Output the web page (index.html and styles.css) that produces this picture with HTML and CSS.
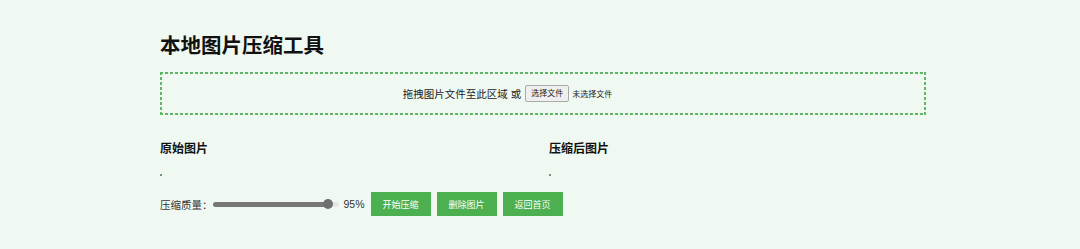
FILE: index.html
```html
<!DOCTYPE html>
<html lang="zh-CN">
<head>
<meta charset="utf-8">
<title>本地图片压缩工具</title>
<link rel="stylesheet" href="styles.css">
</head>
<body>
<div class="container">
  <h1 class="title">本地图片压缩工具</h1>
  <div class="dropzone">
    <span class="drop-text">拖拽图片文件至此区域 或</span>
    <span class="file-input">
      <span class="file-btn">选择文件</span>
      <span class="file-name">未选择文件</span>
    </span>
  </div>
  <div class="columns">
    <div class="col">
      <h3 class="col-title">原始图片</h3>
      <div class="preview"></div>
    </div>
    <div class="col">
      <h3 class="col-title">压缩后图片</h3>
      <div class="preview"></div>
    </div>
  </div>
  <div class="controls">
    <span class="label">压缩质量：</span>
    <input class="range" type="range" min="0" max="100" value="95">
    <span class="value">95%</span>
    <button class="btn">开始压缩</button>
    <button class="btn">删除图片</button>
    <button class="btn">返回首页</button>
  </div>
</div>
</body>
</html>
```
FILE: styles.css
```css
html, body {
  margin: 0;
  padding: 0;
  background: #f0f9f1;
}
body {
  font-family: "Liberation Sans", "Noto Sans CJK SC", sans-serif;
  color: #333;
  font-size: 10.5px;
}
.container {
  width: 766px;
  margin-left: 160px;
  padding-top: 34px;
}
.title {
  margin: 0;
  font-size: 20.5px;
  line-height: 24px;
  font-weight: 700;
  color: #111;
}
.dropzone {
  margin-top: 14px;
  height: 43px;
  display: flex;
  align-items: center;
  justify-content: center;
  color: #222;
  background:
    repeating-linear-gradient(to right, #5fb763 0 3px, transparent 3px 5px) left top / 100% 2px no-repeat,
    repeating-linear-gradient(to right, #5fb763 0 3px, transparent 3px 5px) left bottom / 100% 2px no-repeat,
    repeating-linear-gradient(to bottom, #5fb763 0 3px, transparent 3px 5px) left top / 2px 100% no-repeat,
    repeating-linear-gradient(to bottom, #5fb763 0 3px, transparent 3px 5px) right top / 2px 100% no-repeat;
}
.drop-text {
  font-size: 10.5px;
}
.file-input {
  display: inline-flex;
  align-items: center;
  width: 158px;
  margin-left: 4px;
}
.file-btn {
  font-size: 8px;
  line-height: 13px;
  padding: 1px 5px;
  border: 1px solid #aaa;
  border-radius: 2px;
  background: #efefef;
  color: #222;
}
.file-name {
  margin-left: 3px;
  font-size: 8px;
  color: #222;
}
.columns {
  margin-top: 26px;
  display: grid;
  grid-template-columns: 1fr 1fr;
  column-gap: 12px;
}
.col-title {
  margin: 0;
  font-size: 12px;
  line-height: 16px;
  font-weight: 700;
  color: #111;
}
.preview {
  margin-top: 17px;
  width: 2px;
  height: 2px;
  background: #6f9a78;
}
.controls {
  margin-top: 16px;
  display: flex;
  align-items: center;
  height: 24px;
}
.label {
  font-size: 10.5px;
  color: #333;
}
.range {
  -webkit-appearance: none;
  appearance: none;
  margin: 0;
  width: 126px;
  height: 5px;
  border-radius: 3px;
  background: linear-gradient(to right, #777 0, #777 92%, #e3e6e3 92%, #e3e6e3 100%);
  outline: none;
}
.range::-webkit-slider-thumb {
  -webkit-appearance: none;
  appearance: none;
  width: 10px;
  height: 10px;
  border-radius: 50%;
  background: #6f6f6f;
  border: none;
}
.value {
  margin-left: 5px;
  font-size: 10.5px;
  color: #333;
}
.btn {
  margin-left: 6px;
  height: 24px;
  width: 60px;
  padding: 0;
  border: none;
  background: #4caf50;
  color: #fff;
  font-family: "Liberation Sans", "Noto Sans CJK SC", sans-serif;
  font-size: 9px;
  cursor: pointer;
}
```
